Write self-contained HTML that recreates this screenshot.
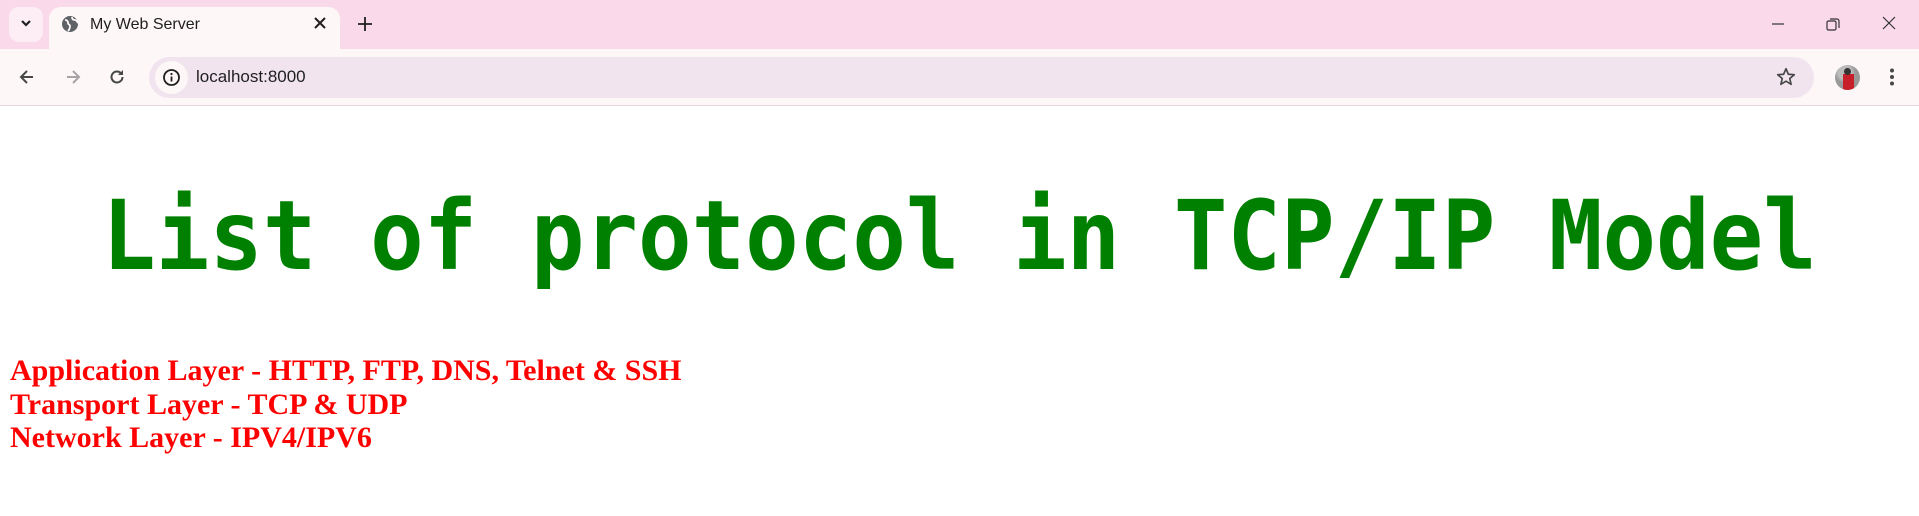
<!DOCTYPE html>
<html><head><meta charset="utf-8"><style>
*{margin:0;padding:0;box-sizing:border-box}
body{width:1919px;height:516px;overflow:hidden;background:#fff;position:relative;font-family:"Liberation Sans",sans-serif}
.abs{position:absolute}
#strip{left:0;top:0;width:1919px;height:49px;background:#fadaea}
#tool{left:0;top:49px;width:1919px;height:57px;background:#fdf7f8;border-bottom:1px solid #e6d6de}
#tab{left:49px;top:7px;width:291px;height:43px;background:#fdf7f8;border-radius:12px 12px 0 0}
#dd{left:9px;top:7px;width:34px;height:35px;background:#fdeef5;border-radius:10px}
#addr{left:149px;top:57px;width:1665px;height:41px;background:#f1e4ef;border-radius:21px}
#info{left:155px;top:61px;width:33px;height:33px;border-radius:50%;background:#fdf7f8}
.t{color:#1f1f1f;font-size:16px;white-space:nowrap}
h1{position:absolute;left:0;width:1919px;top:183px;text-align:center;font-family:"DejaVu Sans Mono","Liberation Mono",monospace;font-weight:bold;font-size:89px;color:#008000;line-height:110px;white-space:nowrap;transform:scaleY(1.08);transform-origin:center 86px}
#list{left:10px;top:354px;font-family:"Liberation Serif",serif;font-weight:bold;font-size:30px;line-height:33.6px;color:#f00;white-space:nowrap}
</style></head><body>
<div id="strip" class="abs"></div>
<div id="dd" class="abs"></div>
<svg class="abs" style="left:19px;top:18px" width="14" height="12" viewBox="0 0 14 12"><path d="M3 3l4 4 4-4" stroke="#1f1f1f" stroke-width="2.2" fill="none"/></svg>
<div id="tab" class="abs"></div>
<svg class="abs" style="left:61px;top:15px" width="18" height="18" viewBox="0 0 18 18"><circle cx="9" cy="9" r="8" fill="#5f6368"/><path d="M4 5c2 0 3 1 3 3s2 1 2 3-1 4-2 5M11 2c0 2 1 3 3 3s2 2 3 3" stroke="#fdf7f8" stroke-width="1.8" fill="none"/></svg>
<div class="abs t" style="left:90px;top:16px;font-size:16px">My Web Server</div>
<svg class="abs" style="left:313px;top:16px" width="14" height="14" viewBox="0 0 14 14"><path d="M2 2l10 10M12 2L2 12" stroke="#1f1f1f" stroke-width="2"/></svg>
<svg class="abs" style="left:357px;top:16px" width="16" height="16" viewBox="0 0 16 16"><path d="M8 1v14M1 8h14" stroke="#1f1f1f" stroke-width="1.8"/></svg>
<svg class="abs" style="left:1770px;top:16px" width="16" height="16" viewBox="0 0 16 16"><path d="M2 8h12" stroke="#333" stroke-width="1.2"/></svg>
<svg class="abs" style="left:1825px;top:16px" width="16" height="16" viewBox="0 0 16 16"><rect x="2" y="5" width="9" height="9" rx="1.5" stroke="#333" stroke-width="1.2" fill="none"/><path d="M5 3h7a2 2 0 0 1 2 2v7" stroke="#333" stroke-width="1.2" fill="none"/></svg>
<svg class="abs" style="left:1881px;top:15px" width="16" height="16" viewBox="0 0 16 16"><path d="M2 2l12 12M14 2L2 14" stroke="#333" stroke-width="1.2"/></svg>
<div id="tool" class="abs"></div>
<svg class="abs" style="left:17px;top:67px" width="20" height="20" viewBox="0 0 20 20"><path d="M16 10H4M10 4l-6 6 6 6" stroke="#474747" stroke-width="2" fill="none"/></svg>
<svg class="abs" style="left:63px;top:67px" width="20" height="20" viewBox="0 0 20 20"><path d="M4 10h12M10 4l6 6-6 6" stroke="#a9a2a6" stroke-width="2" fill="none"/></svg>
<svg class="abs" style="left:107px;top:67px" width="20" height="20" viewBox="0 0 20 20"><path d="M15.5 10a5.5 5.5 0 1 1-1.6-3.9" stroke="#474747" stroke-width="2" fill="none"/><path d="M16 3v5h-5z" fill="#474747"/></svg>
<div id="addr" class="abs"></div>
<div id="info" class="abs"></div>
<svg class="abs" style="left:162px;top:68px" width="19" height="19" viewBox="0 0 19 19"><circle cx="9.5" cy="9.5" r="7.5" stroke="#1f1f1f" stroke-width="1.8" fill="none"/><path d="M9.5 8.5v5" stroke="#1f1f1f" stroke-width="1.8"/><circle cx="9.5" cy="6" r="1.1" fill="#1f1f1f"/></svg>
<div class="abs t" style="left:196px;top:67px;font-size:17px">localhost:8000</div>
<svg class="abs" style="left:1775px;top:66px" width="22" height="22" viewBox="0 0 24 24"><path d="M12 3l2.6 6 6.4.5-4.9 4.2 1.5 6.3L12 16.6 6.4 20l1.5-6.3L3 9.5 9.4 9z" stroke="#474747" stroke-width="1.8" fill="none" stroke-linejoin="round"/></svg>
<div class="abs" style="left:1835px;top:65px;width:25px;height:25px;border-radius:50%;background:radial-gradient(circle at 40% 30%,#bbb 0 30%,#999 45%);overflow:hidden"><div class="abs" style="left:8px;top:9px;width:11px;height:16px;background:#c8202a"></div><div class="abs" style="left:9px;top:3px;width:7px;height:7px;border-radius:50%;background:#333"></div></div>
<svg class="abs" style="left:1887px;top:67px" width="10" height="20" viewBox="0 0 10 20"><circle cx="5" cy="3.5" r="2" fill="#474747"/><circle cx="5" cy="10" r="2" fill="#474747"/><circle cx="5" cy="16.5" r="2" fill="#474747"/></svg>
<h1>List of protocol in TCP/IP Model</h1>
<div id="list" class="abs">Application Layer - HTTP, FTP, DNS, Telnet &amp; SSH<br>Transport Layer - TCP &amp; UDP<br>Network Layer - IPV4/IPV6</div>
</body></html>
